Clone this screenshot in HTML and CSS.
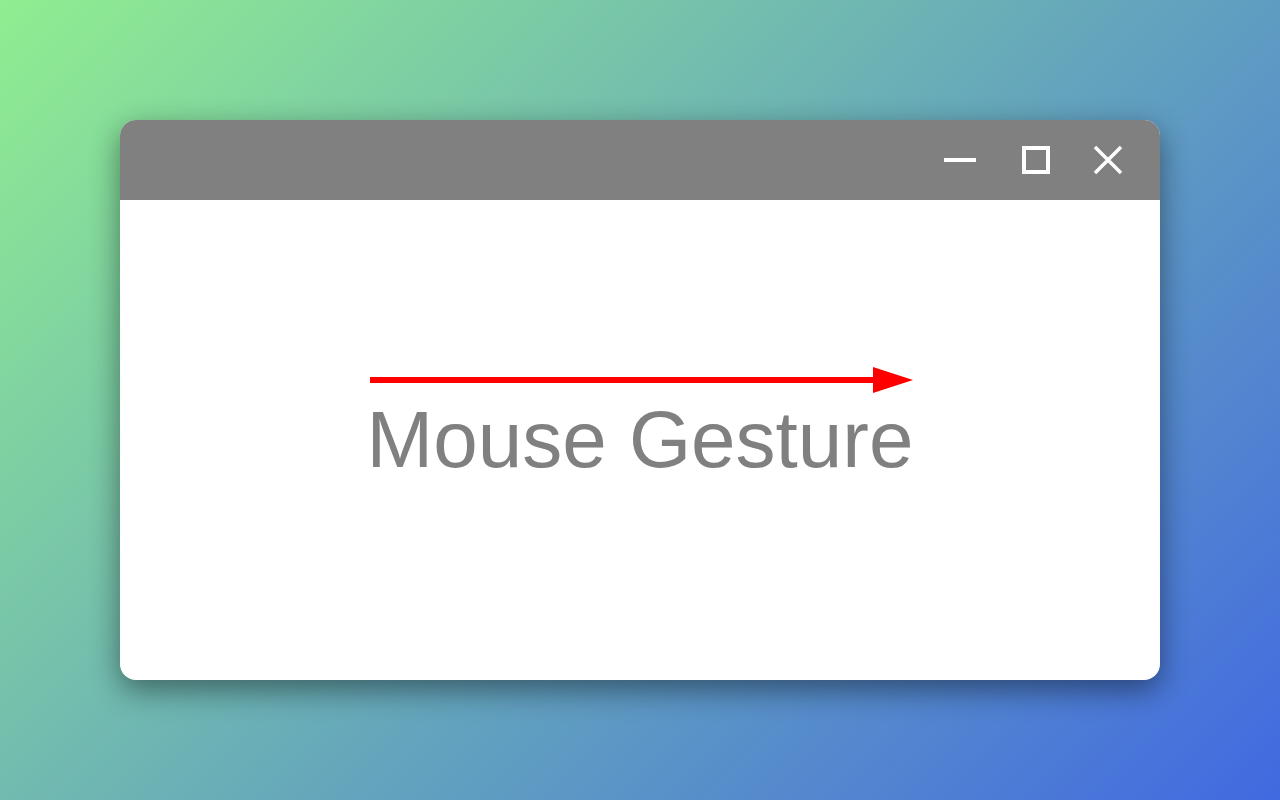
FILE: index.html
```html
<!DOCTYPE html>
<html lang="en">
<head>
<meta charset="utf-8">
<title>Mouse Gesture</title>
<link rel="stylesheet" href="styles.css">
</head>
<body>
<div class="window">
  <div class="titlebar">
    <div class="controls">
      <svg class="btn btn-min" width="40" height="40" viewBox="0 0 40 40"><line x1="4" y1="20" x2="36" y2="20" stroke="#fff" stroke-width="4"/></svg>
      <svg class="btn btn-max" width="40" height="40" viewBox="0 0 40 40"><rect x="8" y="8" width="24" height="24" fill="none" stroke="#fff" stroke-width="4"/></svg>
      <svg class="btn btn-close" width="40" height="40" viewBox="0 0 40 40"><path d="M7 7 L33 33 M33 7 L7 33" stroke="#fff" stroke-width="3.5" fill="none"/></svg>
    </div>
  </div>
  <div class="content">
    <svg class="arrow" width="543" height="26" viewBox="0 0 543 26"><rect x="0" y="10" width="505" height="6" fill="#ff0000"/><polygon points="503,0 543,13 503,26" fill="#ff0000"/></svg>
    <div class="label">Mouse Gesture</div>
  </div>
</div>
</body>
</html>
```
FILE: styles.css
```css
html, body {
  margin: 0;
  padding: 0;
}
body {
  width: 1280px;
  height: 800px;
  background: linear-gradient(135deg, #90ee90 0%, #4169e1 100%);
  display: flex;
  align-items: center;
  justify-content: center;
  font-family: "Liberation Sans", Arial, sans-serif;
  overflow: hidden;
}
.window {
  width: 1040px;
  height: 560px;
  border-radius: 16px;
  overflow: hidden;
  background: #ffffff;
  box-shadow: 0 10px 30px rgba(0, 0, 0, 0.45);
  display: flex;
  flex-direction: column;
}
.titlebar {
  height: 80px;
  background: #808080;
  display: flex;
  align-items: center;
  justify-content: flex-end;
  padding-right: 32px;
  flex-shrink: 0;
}
.controls {
  display: flex;
  align-items: center;
}
.btn {
  display: block;
}
.btn-min {
  margin-right: 36px;
}
.btn-max {
  margin-right: 32px;
}
.content {
  flex: 1;
  display: flex;
  flex-direction: column;
  align-items: center;
  padding-top: 167px;
}
.arrow {
  display: block;
  margin-left: 3px;
}
.label {
  margin-top: 7px;
  font-size: 80px;
  line-height: 80px;
  color: #808080;
}
```
